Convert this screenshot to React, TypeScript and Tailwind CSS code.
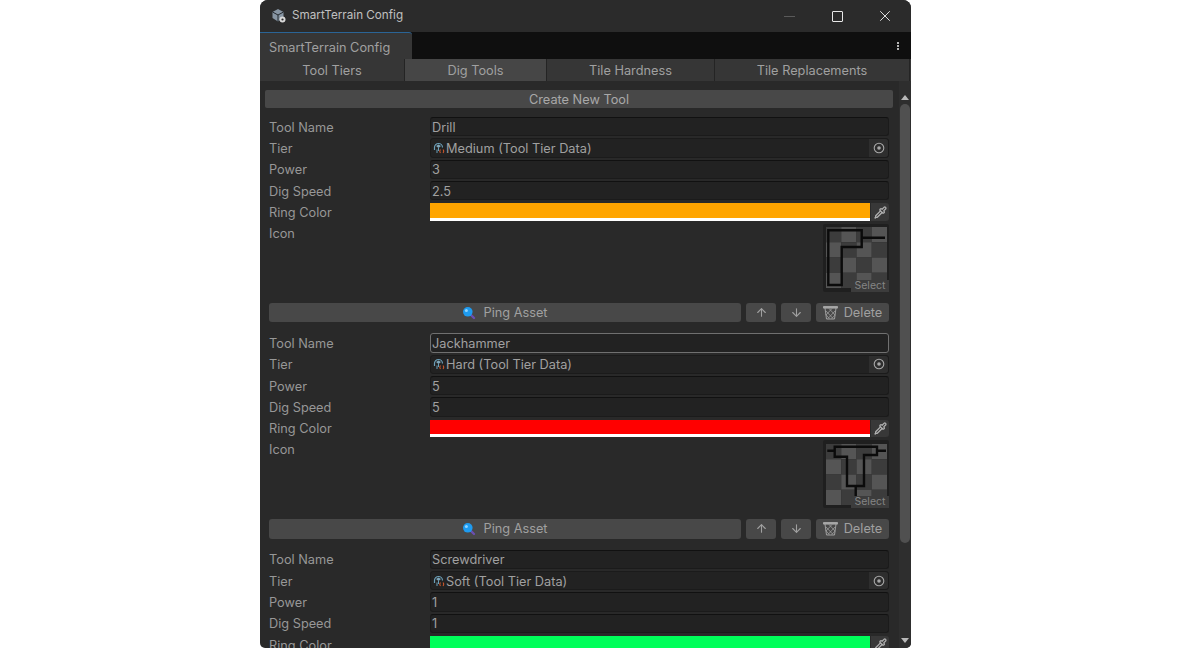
import { ArrowDown, ArrowUp, Pipette, X } from "lucide-react";

type Tool = {
  name: string;
  tier: string;
  power: string;
  speed: string;
  color: string;
  shape: "l" | "t";
  focused?: boolean;
};

const tools: Tool[] = [
  { name: "Drill", tier: "Medium", power: "3", speed: "2.5", color: "bg-[#ffa500]", shape: "l" },
  { name: "Jackhammer", tier: "Hard", power: "5", speed: "5", color: "bg-[#ff0000]", shape: "t", focused: true },
  { name: "Screwdriver", tier: "Soft", power: "1", speed: "1", color: "bg-[#00ff5a]", shape: "l" },
];

const tabs = [
  { label: "Tool Tiers", width: "w-[145px]", active: false },
  { label: "Dig Tools", width: "w-[142px]", active: true },
  { label: "Tile Hardness", width: "w-[168px]", active: false },
  { label: "Tile Replacements", width: "w-[195px]", active: false },
];

function TitleIcon() {
  return (
    <svg width="16" height="16" viewBox="0 0 16 16" fill="none">
      <path d="M7 1 12.5 4V10L7 13.5 1.5 10V4Z" fill="#8795a3" />
      <path d="M1.5 4 7 7 12.5 4M7 7V13.5" stroke="#23282d" strokeWidth="1" />
      <circle cx="11.5" cy="11.5" r="3" fill="#d8d8d8" />
      <circle cx="11.5" cy="11.5" r="1.1" fill="#2a2a2a" />
    </svg>
  );
}

function TierIcon() {
  return (
    <svg width="12" height="12" viewBox="0 0 12 12" fill="none" className="shrink-0">
      <path d="M1.5 8V5.5a4 4 0 0 1 8 0" stroke="#6b9fb8" strokeWidth="1.2" />
      <path d="M3 4 5.5 2.5 8 4 5.5 6Z" fill="#7fa9bd" />
      <path d="M4 7.5V11M5.5 6v3" stroke="#6b9fb8" strokeWidth="1" />
      <path d="M7.5 7.5c-.8 1-.8 2.5 0 3.5M10 7.5c.8 1 .8 2.5 0 3.5" stroke="#c8562b" strokeWidth="1.1" />
    </svg>
  );
}

function PingIcon() {
  return (
    <svg width="14" height="14" viewBox="0 0 14 14" fill="none">
      <path d="m8.5 8.5 3.5 3.5" stroke="#6a4fb0" strokeWidth="2.4" strokeLinecap="round" />
      <circle cx="5.8" cy="5.8" r="4.8" fill="#1e9bf0" />
      <circle cx="4.4" cy="4.4" r="1.5" fill="#8fd4ff" />
    </svg>
  );
}

function TrashIcon() {
  return (
    <svg width="15" height="15" viewBox="0 0 15 15" fill="none" stroke="#a8a8a8" strokeWidth="0.9">
      <path d="M.5 1.5h14v1.6H.5Z" fill="#a8a8a8" />
      <path d="M2 3.1 3.5 14h8L13 3.1" />
      <path d="M3 6 10 13.5M6 3.5l6 6.5M2.8 9.5l3.5 4M12 6 5 13.5M9 3.5 3 10M12.2 10l-3.5 3.5" strokeWidth="0.7" />
    </svg>
  );
}

function TargetIcon() {
  return (
    <svg width="12" height="12" viewBox="0 0 12 12" fill="none">
      <circle cx="6" cy="6" r="4.8" stroke="#a8a8a8" strokeWidth="1.1" />
      <circle cx="6" cy="6" r="1.8" fill="#a8a8a8" />
    </svg>
  );
}

function Thumbnail({ shape }: { shape: Tool["shape"] }) {
  const cells = [];
  for (let row = 0; row < 4; row++) {
    for (let col = 0; col < 4; col++) {
      cells.push(
        <rect
          key={`${row}-${col}`}
          x={col * 15.25}
          y={row * 15.25}
          width="15.25"
          height="15.25"
          stroke="none"
          fill={(row + col) % 2 === 0 ? "#3c3c3c" : "#555555"}
        />,
      );
    }
  }
  return (
    <div className="relative flex h-[68px] w-[66px] items-center justify-center rounded-[2px] bg-[#1f1f1f]">
      <svg width="61" height="61" viewBox="0 0 61 61" fill="none" stroke="#0b0b0b" strokeWidth="2.4">
        {cells}
        {shape === "l" ? (
          <>
            <path d="M2.3 3.3H35.7V20H15.7V58H2.3Z" />
            <path d="M35.7 10.7H59" />
          </>
        ) : (
          <>
            <path d="M8.7 2.7H51V11H38V42H21V12.7H8.7Z" />
            <path d="M1.3 6.7H8.7M51 6.7H60M29.7 42V54" />
          </>
        )}
      </svg>
      <span className="absolute bottom-0 right-0 h-[12px] w-[38px] rounded-tl-[2px] bg-[#3c3c3c] text-center text-[10.5px] leading-[12px] text-[#858585]">
        Select
      </span>
    </div>
  );
}

function Field({ value, focused }: { value: string; focused?: boolean }) {
  return (
    <div
      className={`flex h-full flex-1 items-center rounded-[3px] border bg-[#222222] pl-px pt-px ${
        focused ? "border-[#707070]" : "border-[#1b1b1b] border-t-[#111111]"
      }`}
    >
      {value}
    </div>
  );
}

function Row({ label, children }: { label: string; children: React.ReactNode }) {
  return (
    <div className="flex h-[19.35px] items-center">
      <div className="w-[161px] shrink-0 pt-px text-[#979797]">{label}</div>
      {children}
    </div>
  );
}

function SmallButton({ children }: { children: React.ReactNode }) {
  return (
    <button className="flex h-full w-[30px] items-center justify-center rounded-[3px] bg-[#484848] text-[#a0a0a0]">
      {children}
    </button>
  );
}

function ToolEntry({ tool }: { tool: Tool }) {
  return (
    <section className="pb-[11px] pl-[9px] pr-[10px]">
      <div className="flex flex-col gap-[2px]">
        <Row label="Tool Name">
          <Field value={tool.name} focused={tool.focused} />
        </Row>
        <Row label="Tier">
          <div className="flex h-full flex-1 items-center rounded-[3px] border border-[#1b1b1b] bg-[#222222] pl-[2px]">
            <TierIcon />
            <span className="flex-1 pl-px pt-px">{tool.tier} (Tool Tier Data)</span>
            <div className="flex h-full w-[19px] items-center justify-center rounded-r-[3px] bg-[#2e2e2e]">
              <TargetIcon />
            </div>
          </div>
        </Row>
        <Row label="Power">
          <Field value={tool.power} />
        </Row>
        <Row label="Dig Speed">
          <Field value={tool.speed} />
        </Row>
        <Row label="Ring Color">
          <div className="mt-px flex h-[17.5px] flex-1 items-stretch self-start">
            <div className="flex w-[440px] flex-col">
              <div className={`flex-1 ${tool.color}`} />
              <div className="h-[3px] bg-white" />
            </div>
            <div className="ml-px flex flex-1 items-center justify-center rounded-r-[3px] bg-[#383838]">
              <Pipette size={13} strokeWidth={2.4} className="text-[#b0b0b0]" />
            </div>
          </div>
        </Row>
      </div>
      <div className="mt-[2px] flex h-[68px] items-start justify-between">
        <div className="text-[#979797]">Icon</div>
        <Thumbnail shape={tool.shape} />
      </div>
      <div className="mt-[11px] flex h-[19.6px] gap-[5px] text-[#a0a0a0]">
        <button className="flex h-full w-[472px] items-center justify-center gap-[7px] rounded-[3px] bg-[#484848]">
          <PingIcon />
          Ping Asset
        </button>
        <SmallButton>
          <ArrowUp size={13} strokeWidth={2} />
        </SmallButton>
        <SmallButton>
          <ArrowDown size={13} strokeWidth={2} />
        </SmallButton>
        <button className="flex h-full flex-1 items-center justify-center gap-[6px] rounded-[3px] bg-[#484848]">
          <TrashIcon />
          Delete
        </button>
      </div>
    </section>
  );
}

export default function App() {
  return (
    <div className="h-[650px] w-[1200px] overflow-hidden bg-white font-['Inter',sans-serif] text-[12.75px] text-[#a0a0a0]">
      <div className="ml-[260px] flex h-[648px] w-[651px] flex-col overflow-hidden rounded-t-[8px] rounded-b-[5px] bg-[#292929]">
        <header className="flex h-[32px] shrink-0 items-center bg-[#2b2b2b] pl-[11px] text-[#c0c0c0]">
          <TitleIcon />
          <span className="ml-[5px] flex-1 text-[11.7px]">SmartTerrain Config</span>
          <div className="flex h-full w-[144px] items-center text-[#e0e0e0]">
            <div className="ml-[17px] h-px w-[11px] bg-[#5a5a5a]" />
            <div className="ml-[37px] h-[11px] w-[11px] rounded-[1px] border border-[#e8e8e8]" />
            <X size={18} strokeWidth={1.3} className="ml-[33px]" />
          </div>
        </header>

        <div className="flex h-[27px] shrink-0 items-end justify-between bg-[#0f0f0f]">
          <div className="flex h-full w-[152px] items-center rounded-tr-[3px] border-t-[1.5px] border-[#2a6496] bg-[#363636] pl-[9px] pt-[3px] text-[#a0a0a0]">
            SmartTerrain Config
          </div>
          <div className="mr-[12px] flex h-full flex-col items-center justify-center gap-px pt-px">
            <div className="h-[2px] w-[2px] bg-[#b4b4b4]" />
            <div className="h-[2px] w-[2px] bg-[#b4b4b4]" />
            <div className="h-[2px] w-[2px] bg-[#b4b4b4]" />
          </div>
        </div>

        <nav className="flex h-[22px] shrink-0 bg-[#363636] pr-px">
          {tabs.map((tab) => (
            <div
              key={tab.label}
              className={`flex h-full items-center justify-center border-r border-[#242424] pt-[2px] ${tab.width} ${
                tab.active ? "bg-[#464646]" : "bg-[#363636]"
              }`}
            >
              {tab.label}
            </div>
          ))}
        </nav>

        <div className="flex min-h-0 flex-1">
          <div className="min-w-0 flex-1 overflow-hidden pt-[9px]">
            <button className="mb-[9px] ml-[5px] block h-[18px] w-[628px] rounded-[2px] bg-[#484848] pt-px text-center leading-[18px] text-[#a8a8a8]">
              Create New Tool
            </button>
            {tools.map((tool) => (
              <ToolEntry key={tool.name} tool={tool} />
            ))}
          </div>
          <aside className="flex w-[12px] shrink-0 flex-col items-center bg-[#2e2e2e] pb-[5px] pr-[1px] pt-[14px]">
            <div className="h-0 w-0 border-x-[4px] border-b-[5px] border-x-transparent border-b-[#b8b8b8]" />
            <div className="mt-[4px] h-[439px] w-[10px] rounded-full bg-[#505050]" />
            <div className="flex-1" />
            <div className="h-0 w-0 border-x-[4px] border-t-[5px] border-x-transparent border-t-[#b8b8b8]" />
          </aside>
        </div>
      </div>
    </div>
  );
}
